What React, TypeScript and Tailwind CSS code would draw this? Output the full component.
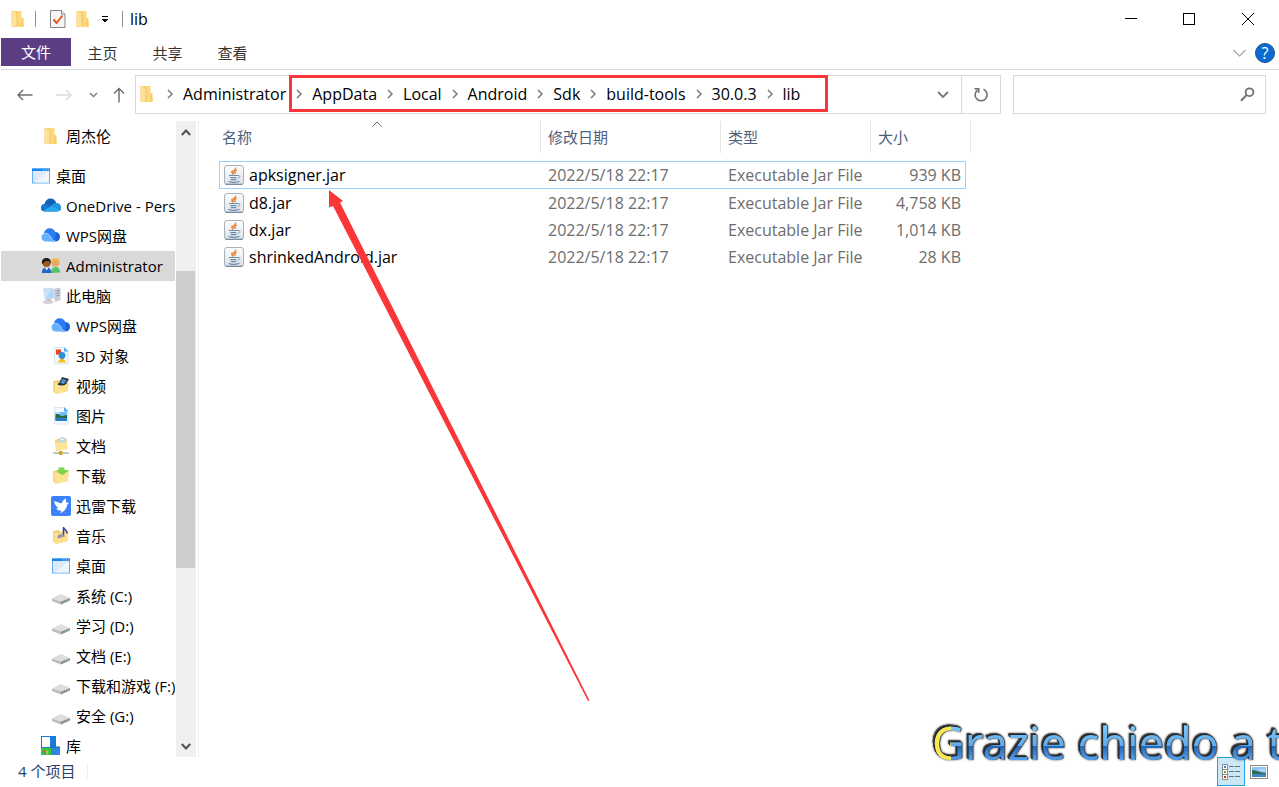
import React from "react";

const FONT = "font-['Open_Sans','Noto_Sans_CJK_SC',sans-serif]";

/* ---------- icons ---------- */

function FolderIcon() {
  return (
    <svg width="20" height="20" viewBox="0 0 20 20" className="shrink-0">
      <path d="M8 2h5.500v10l2 1.500V18H8z" fill="#fdd978" />
      <path d="M13.500 9h2v9h-2z" fill="#f8cc62" />
      <path d="M3.500 2h4.700l1.600 1.300V18H3.500z" fill="#f3ce74" />
      <path d="M3.500 2l4.700 1.800V18.500L3.500 17z" fill="#ffe29a" />
    </svg>
  );
}

function DesktopIcon() {
  return (
    <svg width="20" height="20" viewBox="0 0 20 20" className="shrink-0">
      <rect x="1.500" y="3" width="17" height="14" fill="#dbe9fb" stroke="#5fb0f8" />
      <path d="M4 16.500L16 6h2v10.500z" fill="#eef5fd" />
      <rect x="1" y="2.500" width="18" height="2.500" fill="#1a86f0" />
      <path d="M12 4h1.500M14.500 4H16M17 4h1" stroke="#9fd2ff" />
    </svg>
  );
}

function OneDriveIcon() {
  return (
    <svg width="20" height="20" viewBox="0 0 20 20" className="shrink-0">
      <path d="M4 15.500C1.500 15.500 0 13.800 0 11.700c0-2 1.500-3.600 3.400-3.700C4.500 4.500 6.500 2.500 9.600 2.500c2.700 0 4.800 1.500 5.600 4.500 2.900.200 4.800 2.200 4.800 4.800 0 2.300-1.700 3.700-4 3.700z" fill="#0f62b4" />
      <path d="M0 12C0 9.500 2 8 4 8c2 0 4 1 6 2.500L2.500 15C1 14.600 0 13.500 0 12z" fill="#1279cf" />
      <path d="M9.500 10.500c1.500-2.500 3.500-3.500 5.500-3.500 3 .2 5 2.500 5 4.800 0 1-.2 1.700-.8 2.400z" fill="#1f93e4" />
      <path d="M2 15l8-4.700 9.300 3.800c-.8 1-2 1.400-3.300 1.400H4c-.8 0-1.400-.2-2-.5z" fill="#2aa9ec" />
    </svg>
  );
}

function WpsCloudIcon() {
  return (
    <svg width="20" height="20" viewBox="0 0 20 20" className="shrink-0">
      <path d="M9.500 9.500c1.500-3 3.300-3.700 5.300-3.500 2.500.3 4.200 2.200 4.200 4.700 0 2.700-1.800 4.800-4.400 4.800H11z" fill="#1c63d8" />
      <path d="M2.800 7.500C3.600 4.300 5.600 2.300 8.600 2.300c3.200 0 5.600 2 6.200 5l-.8 6.700-6-3z" fill="#2a7cf5" />
      <path d="M4.600 7.200c2.600 0 4 1.500 5.200 3.600 1.200 2.300 2.400 4 4.800 4.700H4.800C2.200 15.500.5 13.700.5 11.300s1.700-4.100 4.100-4.100z" fill="#62b2ff" />
      <path d="M1 9c1.400-1.600 3.200-2.200 5-1.500 2 .8 3 2.300 4 4s2.200 3.200 4.500 3.800" fill="none" stroke="#d5e9ff" strokeWidth=".7" />
    </svg>
  );
}

function UsersIcon() {
  return (
    <svg width="20" height="20" viewBox="0 0 20 20" className="shrink-0">
      <circle cx="14.500" cy="6.500" r="4" fill="#e8a860" />
      <path d="M10.500 6c0-3 2-4 4-4s4.200 1.200 4 5l-1.300-2.500-4.700-.3z" fill="#f0c040" />
      <path d="M10 17c0-4 2-6 4.500-6s4.700 2 4.700 5.500z" fill="#55c46a" />
      <circle cx="5.500" cy="7" r="4" fill="#a05a20" />
      <path d="M1 8c-.6-4 1.500-6 4.500-6s5 2 4 6L8 5 4 5.200 2.500 7z" fill="#1c1a1a" />
      <path d="M.8 17c0-3.500 1.800-5.500 4.800-5.500 2.800 0 4.700 2 4.700 5.500z" fill="#1e66c8" />
      <path d="M4 11.500l1.700 3 1.700-3z" fill="#fff" />
    </svg>
  );
}

function ComputerIcon() {
  return (
    <svg width="20" height="20" viewBox="0 0 20 20" className="shrink-0">
      <path d="M12 3l6-1.500 1.500 1V14L14 16z" fill="#c9cbd8" />
      <path d="M15.500 5l3-.8M15.500 7.500l3-.8M15.500 10l3-.8" stroke="#8d90a6" />
      <path d="M2 2.500L12 1.800l1.500 11L4 14z" fill="#d9dbe5" />
      <path d="M3.200 3.700l8-.6 1.100 8.600-7.700 1z" fill="#a9d7fb" />
      <path d="M3.200 3.700l8-.6-6.600 9.600z" fill="#c5e5fd" />
      <ellipse cx="7" cy="16" rx="5.500" ry="2.200" fill="#d7d5da" />
      <path d="M6 13h4l.6 2.500H6z" fill="#c3c1c9" />
    </svg>
  );
}

function Sheet() {
  return (
    <>
      <path d="M3.500 1.500h10L17 5v13H3.500z" fill="#f3f9fe" stroke="#d7e8f5" />
      <path d="M13 1v4.500h4.500z" fill="#58a9ea" />
    </>
  );
}

function Objects3DIcon() {
  return (
    <svg width="20" height="20" viewBox="0 0 20 20" className="shrink-0">
      <Sheet />
      <rect x="5" y="3.500" width="5" height="5" fill="#f0401c" />
      <path d="M6.500 16.500L11 11l4.500 5.500z" fill="#fbbe14" />
      <circle cx="11" cy="9.500" r="3.400" fill="#2f8fdc" />
    </svg>
  );
}

function OpenFolder() {
  return (
    <>
      <path d="M2 5l6-1 1 2 8-1.500V15L5 18z" fill="#f5d074" />
      <path d="M2 6.500L5 18l11.500-3.500L18 5.500 8 8z" fill="#fde69c" />
      <path d="M2 5v10.500L5 18 3.500 7z" fill="#f8d680" />
    </>
  );
}

function VideoIcon() {
  return (
    <svg width="20" height="20" viewBox="0 0 20 20" className="shrink-0">
      <OpenFolder />
      <path d="M6.500 9L11 1l7 2-3.500 7z" fill="#26303a" />
      <path d="M9.500 7l2.200-4 3.500 1-2.200 4z" fill="#4b9be0" />
      <path d="M8 7l3-5M14.500 9l2.700-5.500" stroke="#dfe5ea" strokeDasharray="1 1" />
      <path d="M5 18l1-7 12-3-1.500 6.500z" fill="#fde08a" />
    </svg>
  );
}

function PictureIcon() {
  return (
    <svg width="20" height="20" viewBox="0 0 20 20" className="shrink-0">
      <Sheet />
      <rect x="4.500" y="6" width="11.500" height="9" fill="#6db9f2" />
      <path d="M4.500 8.500c3-1.500 4 1 6 1.500s4-1.500 5.500-1V13H4.500z" fill="#256b38" />
      <path d="M4.500 12.500c4-1.500 7-1 11.500-.5v3H4.500z" fill="#2b7ec4" />
      <path d="M5 7h4" stroke="#fff" />
    </svg>
  );
}

function DocumentsIcon() {
  return (
    <svg width="20" height="20" viewBox="0 0 20 20" className="shrink-0">
      <path d="M4 4l5-2 7 1.500V13L5 15z" fill="#f5d074" />
      <path d="M7 5l4-4.500 4.500 2L14 8z" fill="#b5dcf6" />
      <path d="M9 4.500l2-2 2 1z" fill="#fff" />
      <path d="M4 6l2 9 9-2 1.500-7.500-7 1.500z" fill="#fde69c" />
      <path d="M2 17h16" stroke="#a7a9ac" strokeWidth="1.300" />
      <rect x="8" y="15" width="3.500" height="4" fill="#e0a01c" />
    </svg>
  );
}

function DownloadsIcon() {
  return (
    <svg width="20" height="20" viewBox="0 0 20 20" className="shrink-0">
      <OpenFolder />
      <path d="M7.500 1.500h6V4H18l-6.500 5.500L5 4.500h2.500z" fill="#78d64e" />
      <path d="M4.500 16L6 10l12-2.500-1.500 7L5 18z" fill="#fde495" />
    </svg>
  );
}

function ThunderIcon() {
  return (
    <svg width="20" height="20" viewBox="0 0 20 20" className="shrink-0">
      <rect width="20" height="20" rx="2" fill="#3d82fb" />
      <path d="M3 5l7.500 2.500C11.500 5 13 3.300 15 2.300c-.2 2 0 3 .4 4.200L18 7l-2 2c-.4 4-3 6.500-6.800 8.400.7-1.300 1-2 1-3-2.200.3-4-.5-5.200-2 1.200.1 2 0 2.600-.4C5.500 11 3.700 8.500 3 5z" fill="#fff" />
    </svg>
  );
}

function MusicIcon() {
  return (
    <svg width="20" height="20" viewBox="0 0 20 20" className="shrink-0">
      <OpenFolder />
      <path d="M12.500 1v10M12.500 1.500c.5 2.500 4 2 3.500 6" fill="none" stroke="#3d3f9c" strokeWidth="1.500" />
      <ellipse cx="10" cy="11" rx="3.600" ry="2.700" fill="#9a96a6" />
      <path d="M4.500 17l1-4 12-3.500-1 5L5 18z" fill="#fde08a" />
    </svg>
  );
}

function DriveIcon() {
  return (
    <svg width="20" height="20" viewBox="0 0 20 20" className="shrink-0">
      <path d="M1 12.500L10 8l9 4-9 3.500z" fill="#dedede" />
      <path d="M1 12.500L10 15.500v3L1 15z" fill="#b9babb" />
      <path d="M10 15.500l9-3.500v2.500l-9 4z" fill="#8f9294" />
      <path d="M16 15l2-.8" stroke="#6bd08a" />
    </svg>
  );
}

function LibraryIcon() {
  return (
    <svg width="20" height="20" viewBox="0 0 20 20" className="shrink-0">
      <rect x="0" y="0" width="15" height="12" fill="#1a7ad8" />
      <rect x="1" y="1" width="8" height="10" fill="#fff" />
      <rect x="0" y="12" width="10" height="7" fill="#3fc43a" />
      <rect x="10" y="11" width="9" height="8" fill="#2d86e0" />
      <path d="M10 11h9" stroke="#1663b4" />
      <path d="M2.500 14.500h2v1.500h-2z" fill="#e8452c" />
      <path d="M5 14.500h2v1.500H5z" fill="#8bdc4a" />
      <path d="M2.500 16.500h2V18h-2z" fill="#2d86e0" />
      <path d="M5 16.500h2V18H5z" fill="#fbc02d" />
    </svg>
  );
}

function JarIcon() {
  return (
    <svg width="20" height="20" viewBox="0 0 20 20" className="shrink-0">
      <defs>
        <linearGradient id="jar" x1="0" y1="0" x2="0" y2="1">
          <stop offset="0" stopColor="#fdfdfd" />
          <stop offset="1" stopColor="#dde2e6" />
        </linearGradient>
      </defs>
      <rect x=".5" y=".5" width="19" height="19" rx="2.500" fill="url(#jar)" stroke="#a5b1bb" />
      <path d="M1.500 19.300h17" stroke="#74879a" strokeWidth="1.200" />
      <path d="M11.500 2.500c1.300 2.500-4.500 3.300-1.800 6.800M12.700 4.800c-2.800 1.400-1.700 2.300-1.400 4.200M8.500 5.500c-2 2 .3 2.700 0 4" fill="none" stroke="#ee8a3c" strokeWidth="1.400" />
      <path d="M5 10.500h9M6.300 12.700h6.200M6.800 14.600h5.500M4.500 16.500c3 1 8 .9 11-.3" fill="none" stroke="#6b8cab" strokeWidth="1.200" />
      <path d="M13.500 10.500c3-.5 3 2 .3 3" fill="none" stroke="#6b8cab" />
    </svg>
  );
}

function Chevron() {
  return (
    <svg width="6" height="10" viewBox="0 0 6 10" className="mx-[10px] shrink-0">
      <path d="M1 1l4 4-4 4" fill="none" stroke="#777" strokeWidth="1.500" />
    </svg>
  );
}

/* ---------- data ---------- */

type NavItem = { label: string; icon: React.ReactNode; level: 0 | 1 | 2; active?: boolean };

const levelPad = { 0: "pl-[30px]", 1: "pl-10", 2: "pl-[50px]" };

const navItems: NavItem[] = [
  { label: "桌面", icon: <DesktopIcon />, level: 0 },
  { label: "OneDrive - Personal", icon: <OneDriveIcon />, level: 1 },
  { label: "WPS网盘", icon: <WpsCloudIcon />, level: 1 },
  { label: "Administrator", icon: <UsersIcon />, level: 1, active: true },
  { label: "此电脑", icon: <ComputerIcon />, level: 1 },
  { label: "WPS网盘", icon: <WpsCloudIcon />, level: 2 },
  { label: "3D 对象", icon: <Objects3DIcon />, level: 2 },
  { label: "视频", icon: <VideoIcon />, level: 2 },
  { label: "图片", icon: <PictureIcon />, level: 2 },
  { label: "文档", icon: <DocumentsIcon />, level: 2 },
  { label: "下载", icon: <DownloadsIcon />, level: 2 },
  { label: "迅雷下载", icon: <ThunderIcon />, level: 2 },
  { label: "音乐", icon: <MusicIcon />, level: 2 },
  { label: "桌面", icon: <DesktopIcon />, level: 2 },
  { label: "系统 (C:)", icon: <DriveIcon />, level: 2 },
  { label: "学习 (D:)", icon: <DriveIcon />, level: 2 },
  { label: "文档 (E:)", icon: <DriveIcon />, level: 2 },
  { label: "下载和游戏 (F:)", icon: <DriveIcon />, level: 2 },
  { label: "安全 (G:)", icon: <DriveIcon />, level: 2 },
  { label: "库", icon: <LibraryIcon />, level: 1 },
];

const crumbs = ["AppData", "Local", "Android", "Sdk", "build-tools", "30.0.3", "lib"];

const files = [
  { name: "apksigner.jar", size: "939 KB" },
  { name: "d8.jar", size: "4,758 KB" },
  { name: "dx.jar", size: "1,014 KB" },
  { name: "shrinkedAndroid.jar", size: "28 KB" },
];

/* ---------- parts ---------- */

function NavRow({ item }: { item: NavItem }) {
  return (
    <li>
      <button
        className={`flex h-[30px] w-full items-center gap-[5px] overflow-hidden whitespace-nowrap text-left ${levelPad[item.level]} ${item.active ? "bg-[#d9d9d9]" : ""}`}
      >
        {item.icon}
        <span>{item.label}</span>
      </button>
    </li>
  );
}

function TitleBar() {
  return (
    <header className="flex h-[38px] items-center pl-2">
      <FolderIcon />
      <span className="mx-[7px] h-4 w-px bg-[#909090]" />
      <button aria-label="属性" className="ml-[7px]">
        <svg width="16" height="20" viewBox="0 0 16 20">
          <path d="M.5 1.500h11l3.500 3.500v13.500H.5z" fill="#f4f6f8" stroke="#858585" />
          <path d="M11.500 1.500V5H15" fill="#fff" stroke="#858585" />
          <path d="M3.500 10.500l3 3.500 6-7.500" fill="none" stroke="#e8591c" strokeWidth="2" />
        </svg>
      </button>
      <button aria-label="新建文件夹" className="ml-[7px]">
        <FolderIcon />
      </button>
      <button aria-label="自定义快速访问工具栏" className="ml-2">
        <svg width="8" height="8" viewBox="0 0 8 8" shapeRendering="crispEdges">
          <path d="M1 1h6v1H1z" />
          <path d="M0 4h7L3.500 7.500z" />
        </svg>
      </button>
      <span className="ml-[13px] h-4 w-px bg-[#909090]" />
      <h1 className="ml-[7px] text-base">lib</h1>
      <div className="ml-auto flex pr-px">
        <button aria-label="最小化" className="flex h-[38px] w-[58px] items-center justify-center">
          <svg width="12" height="12" viewBox="0 0 12 12">
            <path d="M0 5.500h12" stroke="#000" />
          </svg>
        </button>
        <button aria-label="最大化" className="flex h-[38px] w-[58px] items-center justify-center">
          <svg width="12" height="12" viewBox="0 0 12 12">
            <rect x=".5" y=".5" width="11" height="11" fill="none" stroke="#000" />
          </svg>
        </button>
        <button aria-label="关闭" className="flex h-[38px] w-[60px] items-center justify-center">
          <svg width="12" height="12" viewBox="0 0 12 12">
            <path d="M0 0l12 12M12 0L0 12" stroke="#000" />
          </svg>
        </button>
      </div>
    </header>
  );
}

function RibbonTabs() {
  return (
    <nav className="ml-px flex h-8 items-start border-b border-[#dadbdc] text-[#333]">
      <button className="h-7 w-[70px] bg-[#5a3d83] text-white">文件</button>
      <div className="-ml-px flex">
        <button className="h-7 w-[65px] pt-[2px]">主页</button>
        <button className="h-7 w-[65px] pt-[2px]">共享</button>
        <button className="h-7 w-[65px] pt-[2px]">查看</button>
      </div>
      <div className="ml-auto flex h-7 items-center gap-[9px] pr-1 pt-[2px]">
        <button aria-label="展开功能区">
          <svg width="13" height="8" viewBox="0 0 13 8">
            <path d="M.5 1l6 6 6-6" fill="none" stroke="#a6a6a6" strokeWidth="1.200" />
          </svg>
        </button>
        <button
          aria-label="帮助"
          className="flex size-5 items-center justify-center rounded-full border border-[#1b4f8c] bg-[#0a6cd0] text-base leading-4 text-white"
        >
          ?
        </button>
      </div>
    </nav>
  );
}

function AddressBar() {
  return (
    <div className="flex h-[51px] items-start pt-[5px]">
      <div className="flex h-[39px] w-[135px] items-center pl-[17px]">
        <button aria-label="返回">
          <svg width="16" height="12" viewBox="0 0 16 12">
            <path d="M15.500 6H1M6 1L1 6l5 5" fill="none" stroke="#707070" strokeWidth="1.500" />
          </svg>
        </button>
        <button aria-label="前进" className="ml-[23px]">
          <svg width="16" height="12" viewBox="0 0 16 12">
            <path d="M0 6h14.500M10 1l5 5-5 5" fill="none" stroke="#dcdcdc" strokeWidth="1.500" />
          </svg>
        </button>
        <button aria-label="最近浏览的位置" className="ml-[17px]">
          <svg width="9" height="6" viewBox="0 0 9 6">
            <path d="M1 1l3.500 3.500L8 1" fill="none" stroke="#808080" strokeWidth="1.500" />
          </svg>
        </button>
        <button aria-label="上移" className="ml-[15px]">
          <svg width="12" height="16" viewBox="0 0 12 16">
            <path d="M6 15.500V1M1 6.500L6 1.500l5 5" fill="none" stroke="#707070" strokeWidth="1.500" />
          </svg>
        </button>
      </div>
      <div className="flex h-[39px] min-w-0 flex-1 items-stretch border border-[#d9d9d9] text-base leading-5">
        <div className="flex min-w-0 flex-1 items-center pb-[2px] pl-px">
          <FolderIcon />
          <Chevron />
          <button>Administrator</button>
          <div className="relative flex items-center whitespace-nowrap">
            {crumbs.map((c) => (
              <React.Fragment key={c}>
                <Chevron />
                <button>{c}</button>
              </React.Fragment>
            ))}
            <span className="pointer-events-none absolute -top-[9px] -right-7 -bottom-2 left-[3px] border-[3px] border-[#fb3638]" />
          </div>
        </div>
        <button aria-label="以前的位置" className="px-3">
          <svg width="12" height="8" viewBox="0 0 12 8">
            <path d="M1 1l5 5 5-5" fill="none" stroke="#777" strokeWidth="1.800" />
          </svg>
        </button>
        <button aria-label="刷新" className="flex w-[39px] items-center justify-center border-l border-[#d9d9d9]">
          <svg width="16" height="16" viewBox="0 0 16 16">
            <path d="M10.500 2.300A6 6 0 1 1 4.500 3" fill="none" stroke="#707070" strokeWidth="1.600" />
            <path d="M1.500 1.700h4.200V6" fill="none" stroke="#707070" strokeWidth="1.600" />
          </svg>
        </button>
      </div>
      <label className="mr-[13px] ml-3 flex h-[39px] w-[253px] items-center border border-[#d9d9d9] pr-[10px]">
        <input aria-label="搜索" className="min-w-0 flex-1 px-2 outline-none" />
        <svg width="15" height="15" viewBox="0 0 15 15">
          <circle cx="9.500" cy="5.200" r="3.900" fill="none" stroke="#707070" strokeWidth="1.800" />
          <path d="M6.600 8L1 13.700" stroke="#707070" strokeWidth="2" />
        </svg>
      </label>
    </div>
  );
}

function ScrollBar() {
  return (
    <div className="flex w-5 flex-col bg-[#f0f0f0]">
      <button aria-label="向上滚动" className="flex h-[22px] items-center justify-center pr-px">
        <svg width="10" height="7" viewBox="0 0 10 7">
          <path d="M.8 6L5 1.500 9.200 6" fill="none" stroke="#505050" strokeWidth="2" />
        </svg>
      </button>
      <div className="flex flex-1 flex-col pr-px">
        <div className="flex-[128]" />
        <div className="flex-[297] bg-[#cdcdcd]" />
        <div className="flex-[167]" />
      </div>
      <button aria-label="向下滚动" className="flex h-[22px] items-center justify-center pr-px">
        <svg width="10" height="7" viewBox="0 0 10 7">
          <path d="M.8 1L5 5.500 9.200 1" fill="none" stroke="#505050" strokeWidth="2" />
        </svg>
      </button>
    </div>
  );
}

function FileTable() {
  return (
    <table className="w-[752px] table-fixed border-separate border-spacing-0 text-left">
      <colgroup>
        <col className="w-[322px]" />
        <col className="w-[180px]" />
        <col className="w-[150px]" />
        <col className="w-[100px]" />
      </colgroup>
      <thead className="text-[#4c607a]">
        <tr className="h-8">
          <th className="relative border-r border-[#e5e5e5] p-0 pl-[3px] font-normal">
            名称
            <svg width="10" height="6" viewBox="0 0 10 6" className="absolute top-0 left-[153px]">
              <path d="M.5 5.500L5 1l4.500 4.500" fill="none" stroke="#666" />
            </svg>
          </th>
          <th className="border-r border-[#e5e5e5] p-0 pl-[7px] font-normal">修改日期</th>
          <th className="border-r border-[#e5e5e5] p-0 pl-[7px] font-normal">类型</th>
          <th className="border-r border-[#e5e5e5] p-0 pl-[7px] font-normal">大小</th>
        </tr>
      </thead>
      <tbody className="text-base leading-5 text-[#6d6d6d] before:block before:h-2">
        {files.map((f, i) => {
          const edge = i === 0 ? "h-7 border-y border-[#99d1ff]" : "h-[27px] border-transparent";
          return (
            <tr key={f.name}>
              <td className="p-0 text-black">
                <div className={`flex items-center gap-[5px] border-l pl-1 ${edge}`}>
                  <JarIcon />
                  {f.name}
                </div>
              </td>
              <td className="p-0">
                <div className={`flex items-center pl-[7px] ${edge}`}>2022/5/18 22:17</div>
              </td>
              <td className="p-0">
                <div className={`flex items-center pl-[7px] ${edge}`}>Executable Jar File</div>
              </td>
              <td className="p-0 pr-[5px]">
                <div className={`flex items-center justify-end border-r pr-1 ${edge}`}>{f.size}</div>
              </td>
            </tr>
          );
        })}
      </tbody>
    </table>
  );
}

export default function App() {
  return (
    <div className={`relative flex min-h-screen flex-col overflow-hidden bg-white text-[15px] leading-5 text-black ${FONT}`}>
      <TitleBar />
      <RibbonTabs />
      <AddressBar />
      <main className="flex flex-1">
        <aside className="w-[175px] overflow-hidden">
          <ul className="h-[636px] overflow-hidden pl-px">
            <NavRow item={{ label: "周杰伦", icon: <FolderIcon />, level: 1 }} />
            <li className="h-[10px]" />
            {navItems.map((item, i) => (
              <NavRow key={i} item={item} />
            ))}
          </ul>
        </aside>
        <div className="ml-px flex">
          <ScrollBar />
        </div>
        <section className="relative ml-[2px] min-w-0 flex-1 border-l border-[#f0f0f0] pl-5">
          <FileTable />
          <svg width="270" height="520" viewBox="0 0 270 520" className="pointer-events-none absolute top-[65px] left-[125px]">
            <path d="M5 4l14 11-3 1.500L265.500 514.500 264 515 9 20l-4 1.500z" fill="#fb3638" />
          </svg>
        </section>
      </main>
      <footer className="flex h-[30px] items-start justify-between pl-[18px]">
        <div className="flex h-7 items-center text-[#24446b]">
          4 个项目
          <span className="ml-3 h-4 w-px bg-[#eeeeee]" />
        </div>
        <div className="flex items-center gap-[5px] pr-[11px]">
          <button aria-label="详细信息" className="flex h-[29px] w-7 items-center justify-center border border-[#26a0da] bg-[#cce8f6]">
            <svg width="18" height="16" viewBox="0 0 18 16">
              <path d="M.5.5h5v15h-5zM.5 5.500h5M.5 10.500h5" fill="#fff" stroke="#8a8a8a" />
              <path d="M2 2h2v2H2z" fill="#3b82d0" />
              <path d="M2 7h2v2H2z" fill="#7a9a30" />
              <path d="M2 12h2v2H2z" fill="#d03020" />
              <path d="M7 2.500h5M13 2.500h5M7 7.500h5M13 7.500h5M7 12.500h5M13 12.500h5" stroke="#707070" />
            </svg>
          </button>
          <button aria-label="大图标">
            <svg width="18" height="14" viewBox="0 0 18 14">
              <rect x=".5" y=".5" width="17" height="13" fill="#fff" stroke="#8a8a8a" />
              <rect x="2" y="2" width="14" height="10" fill="#8cc3f3" />
              <path d="M2 5c5 0 8 3 14 3v1H2z" fill="#2c6b4f" />
              <path d="M2 9h14v3H2z" fill="#4385c0" />
              <path d="M9 5h6" stroke="#e7f3fd" />
            </svg>
          </button>
        </div>
      </footer>
      <p className="pointer-events-none absolute top-[715px] left-[932px] whitespace-nowrap font-['Noto_Sans',sans-serif] text-[45px] leading-[56px] [filter:drop-shadow(-1px_-1px_0_#222)_drop-shadow(-1px_-1px_0_#444)_drop-shadow(1px_0_0_#555)_drop-shadow(0_0_1px_#666)]">
        <span className="bg-[linear-gradient(#fbe84e,#fbe84e),linear-gradient(#7fd0fa_15%,#5fabee_55%,#1f66b8_56%,#5aa5f3_80%)] bg-[length:19px_100%,100%_100%] bg-clip-text bg-no-repeat text-transparent">
          Grazie chiedo a te
        </span>
      </p>
    </div>
  );
}
